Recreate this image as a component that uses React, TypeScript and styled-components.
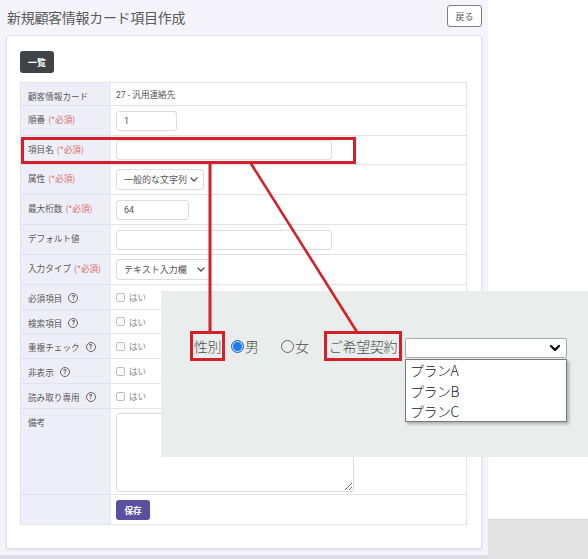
import React from "react";
import styled, { createGlobalStyle } from "styled-components";

const GlobalStyle = createGlobalStyle`
  html, body {
    margin: 0;
    padding: 0;
    background: #ffffff;
  }
  body {
    font-family: "Noto Sans CJK JP", "Roboto", sans-serif;
  }
  * {
    box-sizing: border-box;
  }
`;

type FieldRow = {
  label: string;
  required?: boolean;
  help?: boolean;
  h: number;
  kind: "text" | "input" | "select" | "check" | "textarea" | "save";
  value?: string;
  w?: number;
};

const rows: FieldRow[] = [
  { label: "顧客情報カード", h: 23, kind: "text", value: "27 - 汎用連絡先" },
  { label: "順番", required: true, h: 30, kind: "input", value: "1", w: 61 },
  { label: "項目名", required: true, h: 29, kind: "input", value: "", w: 216 },
  { label: "属性", required: true, h: 30, kind: "select", value: "一般的な文字列", w: 88 },
  { label: "最大桁数", required: true, h: 30, kind: "input", value: "64", w: 73 },
  { label: "デフォルト値", h: 30, kind: "input", value: "", w: 216 },
  { label: "入力タイプ", required: true, h: 30, kind: "select", value: "テキスト入力欄", w: 95 },
  { label: "必須項目", help: true, h: 25, kind: "check" },
  { label: "検索項目", help: true, h: 24, kind: "check" },
  { label: "重複チェック", help: true, h: 25, kind: "check" },
  { label: "非表示", help: true, h: 25, kind: "check" },
  { label: "読み取り専用", help: true, h: 25, kind: "check" },
  { label: "備考", h: 86, kind: "textarea" },
  { label: "", h: 30, kind: "save" },
];

const Chevron: React.FC<{ size?: number; stroke?: number; color?: string }> = ({
  size = 8,
  stroke = 1.6,
  color = "#333",
}) => (
  <svg width={size} height={size * 0.62} viewBox="0 0 10 6.2">
    <path
      d="M1 1 L5 5 L9 1"
      fill="none"
      stroke={color}
      strokeWidth={stroke}
      strokeLinecap="round"
      strokeLinejoin="round"
    />
  </svg>
);

const renderValue = (r: FieldRow) => {
  switch (r.kind) {
    case "text":
      return <PlainText>{r.value}</PlainText>;
    case "input":
      return <TextInput readOnly value={r.value} $w={r.w || 100} />;
    case "select":
      return (
        <FakeSelect $w={r.w || 90}>
          <span>{r.value}</span>
          <Chevron size={8} stroke={1.5} color="#444" />
        </FakeSelect>
      );
    case "check":
      return (
        <CheckLine>
          <CheckBox />
          <span>はい</span>
        </CheckLine>
      );
    case "textarea":
      return <Memo readOnly />;
    case "save":
      return <SaveButton>保存</SaveButton>;
  }
};

const App: React.FC = () => {
  return (
    <>
      <GlobalStyle />
      <Stage>
        <MainPane>
          <Header>
            <Title>新規顧客情報カード項目作成</Title>
            <BackButton>戻る</BackButton>
          </Header>
          <Card>
            <ListButton>一覧</ListButton>
            <FormTable>
              {rows.map((r, i) => (
                <Row key={i} $h={r.h}>
                  <LabelCell>
                    {r.label}
                    {r.required && <Required>(*必須)</Required>}
                    {r.help && <HelpIcon>?</HelpIcon>}
                  </LabelCell>
                  <ValueCell>{renderValue(r)}</ValueCell>
                </Row>
              ))}
            </FormTable>
          </Card>
        </MainPane>
        <SidePane>
          <SideWhite />
          <SideGray />
        </SidePane>

        <Callout>
          <CalloutRow>
            <Tagged $w={35}>性別</Tagged>
            <RadioItem $gap={6}>
              <Radio $checked />
              <span>男</span>
            </RadioItem>
            <RadioItem $gap={22}>
              <Radio />
              <span>女</span>
            </RadioItem>
            <Tagged $w={78} $gap={15}>
              ご希望契約
            </Tagged>
            <SelectWrap>
              <PlanSelect>
                <Chevron size={10} stroke={2.4} color="#111" />
              </PlanSelect>
              <PlanList>
                <PlanOption>プランA</PlanOption>
                <PlanOption>プランB</PlanOption>
                <PlanOption>プランC</PlanOption>
              </PlanList>
            </SelectWrap>
          </CalloutRow>
        </Callout>

        <Annotations width={588} height={559} viewBox="0 0 588 559">
          <rect
            x={22.5}
            y={138.5}
            width={332}
            height={24}
            fill="none"
            stroke="#d4202b"
            strokeWidth={3}
          />
          <line x1={210} y1={162} x2={210} y2={332} stroke="#d4202b" strokeWidth={3} />
          <line x1={250} y1={162} x2={357} y2={332} stroke="#d4202b" strokeWidth={2.6} />
        </Annotations>
      </Stage>
    </>
  );
};

export default App;

const Stage = styled.div`
  position: relative;
  width: 588px;
  height: 559px;
  overflow: hidden;
  display: flex;
`;

const MainPane = styled.div`
  width: 488px;
  height: 559px;
  background: #f4f4fa;
  border-bottom: 4px solid #dedee2;
  display: flex;
  flex-direction: column;
`;

const SidePane = styled.div`
  flex: 1;
  display: flex;
  flex-direction: column;
`;

const SideWhite = styled.div`
  height: 519px;
  background: #ffffff;
`;

const SideGray = styled.div`
  flex: 1;
  background: #e4e4e4;
  border-top: 1px solid #d6d6d6;
`;

const Header = styled.div`
  height: 35px;
  display: flex;
  align-items: flex-start;
  justify-content: space-between;
  padding: 5px 6px 0 7px;
`;

const Title = styled.h1`
  margin: 2px 0 0;
  font-size: 14px;
  font-weight: 400;
  color: #5a5a5a;
  letter-spacing: -0.3px;
`;

const BackButton = styled.button`
  width: 35px;
  height: 22px;
  padding: 0;
  border: 1px solid #7d7d85;
  border-radius: 3px;
  background: #fff;
  color: #555;
  font-family: "Noto Sans CJK JP", sans-serif;
  font-size: 9px;
`;

const Card = styled.div`
  margin: 0 6px;
  height: 514px;
  background: #fff;
  border: 1px solid #e2e2ec;
  border-radius: 2px;
  box-shadow: 0 1px 2px rgba(60, 60, 110, 0.12);
  padding: 15px 14px 0 13px;
`;

const ListButton = styled.button`
  display: block;
  width: 34px;
  height: 22px;
  padding: 0;
  border: none;
  border-radius: 3px;
  background: #3e4448;
  color: #fff;
  font-family: "Noto Sans CJK JP", sans-serif;
  font-size: 9px;
  font-weight: 700;
  margin-bottom: 9px;
`;

const FormTable = styled.div`
  border: 1px solid #e3e3e7;
  border-bottom: none;
`;

const Row = styled.div<{ $h: number }>`
  display: grid;
  grid-template-columns: 90px 1fr;
  height: ${(p) => p.$h}px;
  border-bottom: 1px solid #e3e3e7;
`;

const LabelCell = styled.div`
  background: #eeeef8;
  border-right: 1px solid #e6e6ee;
  padding: 7px 0 0 7px;
  font-size: 8.6px;
  color: #5a5a5a;
  display: flex;
  align-items: flex-start;
  white-space: nowrap;
`;

const Required = styled.span`
  color: #d9706a;
  margin-left: 3px;
`;

const HelpIcon = styled.span`
  display: inline-flex;
  align-items: center;
  justify-content: center;
  width: 10px;
  height: 10px;
  margin-left: 6px;
  margin-top: 1px;
  border: 1px solid #666;
  border-radius: 50%;
  font-family: "Roboto", sans-serif;
  font-size: 7px;
  font-weight: 700;
  color: #555;
`;

const ValueCell = styled.div`
  display: flex;
  align-items: center;
  padding-left: 5px;
`;

const PlainText = styled.span`
  font-family: "Roboto", "Noto Sans CJK JP", sans-serif;
  font-size: 8.6px;
  color: #555;
`;

const TextInput = styled.input<{ $w: number }>`
  width: ${(p) => p.$w}px;
  height: 20px;
  border: 1px solid #dcdcdc;
  border-radius: 3px;
  padding: 0 7px;
  font-family: "Roboto", sans-serif;
  font-size: 9px;
  color: #555;
  outline: none;
`;

const FakeSelect = styled.div<{ $w: number }>`
  width: ${(p) => p.$w}px;
  height: 21px;
  border: 1px solid #dcdcdc;
  border-radius: 3px;
  padding: 0 5px 0 7px;
  display: flex;
  align-items: center;
  justify-content: space-between;
  font-size: 9px;
  color: #555;
`;

const CheckLine = styled.div`
  display: flex;
  align-items: center;
  gap: 4px;
  font-size: 8.6px;
  color: #888;
`;

const CheckBox = styled.span`
  width: 9px;
  height: 9px;
  border: 1px solid #bdbdbd;
  border-radius: 2px;
  background: #fff;
`;

const Memo = styled.textarea`
  width: 238px;
  height: 79px;
  border: 1px solid #dcdcdc;
  border-radius: 3px;
  resize: both;
  outline: none;
  margin-top: 1px;
`;

const SaveButton = styled.button`
  width: 34px;
  height: 20px;
  padding: 0;
  border: none;
  border-radius: 3px;
  background: #5b4f9f;
  color: #fff;
  font-family: "Noto Sans CJK JP", sans-serif;
  font-size: 8.6px;
  font-weight: 700;
`;

const Callout = styled.div`
  position: absolute;
  left: 161px;
  top: 291px;
  width: 427px;
  height: 166px;
  background: #e9edeb;
  padding: 40px 0 0 29px;
`;

const CalloutRow = styled.div`
  display: flex;
  align-items: center;
  font-family: "Noto Sans CJK JP", sans-serif;
  font-size: 14px;
  font-weight: 300;
  color: #4d4d4d;
`;

const Tagged = styled.span<{ $w: number; $gap?: number }>`
  display: inline-flex;
  align-items: center;
  justify-content: center;
  width: ${(p) => p.$w}px;
  height: 30px;
  margin-left: ${(p) => p.$gap || 0}px;
  border: 3px solid #d4202b;
  white-space: nowrap;
  letter-spacing: -0.3px;
`;

const RadioItem = styled.span<{ $gap: number }>`
  display: inline-flex;
  align-items: center;
  margin-left: ${(p) => p.$gap}px;
`;

const Radio = styled.span<{ $checked?: boolean }>`
  width: 13px;
  height: 13px;
  border-radius: 50%;
  border: 1px solid ${(p) => (p.$checked ? "#1f6fd6" : "#666")};
  background: ${(p) => (p.$checked ? "#1f7ae8" : "transparent")};
  box-shadow: ${(p) => (p.$checked ? "inset 0 0 0 1px #cfe2fb" : "none")};
  margin-right: 1px;
`;

const SelectWrap = styled.div`
  position: relative;
  margin-left: 3px;
  margin-top: 4px;
`;

const PlanSelect = styled.div`
  width: 162px;
  height: 20px;
  background: #fff;
  border: 1px solid #a9a9a9;
  border-radius: 2px;
  display: flex;
  align-items: center;
  justify-content: flex-end;
  padding-right: 6px;
`;

const PlanList = styled.div`
  position: absolute;
  left: 0;
  top: 21px;
  width: 162px;
  height: 63px;
  background: #fff;
  border: 1px solid #7a7a7a;
  box-shadow: 2px 2px 3px rgba(0, 0, 0, 0.28);
  padding: 0 0 0 4px;
`;

const PlanOption = styled.div`
  height: 20.5px;
  line-height: 20px;
  font-size: 14px;
  color: #222;
  letter-spacing: -0.5px;
`;

const Annotations = styled.svg`
  position: absolute;
  left: 0;
  top: 0;
  pointer-events: none;
`;
